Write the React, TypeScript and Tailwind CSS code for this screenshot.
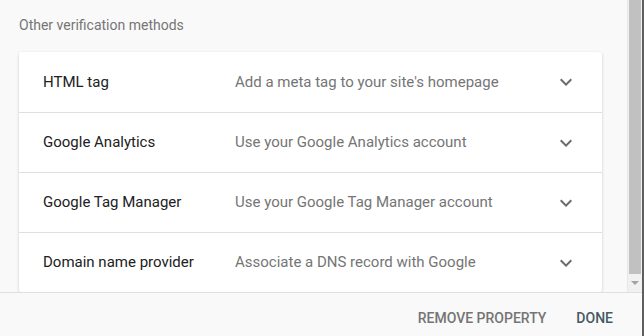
const METHODS = [
  { name: 'HTML tag', desc: "Add a meta tag to your site's homepage" },
  { name: 'Google Analytics', desc: 'Use your Google Analytics account' },
  { name: 'Google Tag Manager', desc: 'Use your Google Tag Manager account' },
  { name: 'Domain name provider', desc: 'Associate a DNS record with Google' },
];

function ExpandMore() {
  return (
    <svg width="24" height="24" viewBox="0 0 24 24" className="text-[#6b6b6b]">
      <path d="M16.59 8.59L12 13.17 7.41 8.59 6 10l6 6 6-6z" fill="currentColor" />
    </svg>
  );
}

export default function App() {
  return (
    <div className="flex w-[644px] h-[336px] bg-[#f9f9f9] font-['Roboto',sans-serif] overflow-hidden">
      <div className="flex flex-col w-[642px]">
        {/* Scroll area */}
        <div className="flex h-[292px]">
          <div className="flex-1 overflow-hidden pl-[19px] pr-[25px]">
            <p className="pt-[16px] text-[14px] leading-[18px] text-[#757575]">Other verification methods</p>
            <div className="mt-[18px] bg-white rounded-[2px] shadow-[0_1px_3px_rgba(0,0,0,0.2)]">
              {METHODS.map((m, i) => (
                <div
                  key={m.name}
                  className={`flex items-center h-[60px] ${i > 0 ? 'border-t border-[#e0e0e0]' : ''}`}
                >
                  <span className="w-[216px] pl-[24px] text-[15px] text-[#212121]">{m.name}</span>
                  <span className="flex-1 text-[15px] text-[#757575]">{m.desc}</span>
                  <span className="mr-[24px] flex items-center">
                    <ExpandMore />
                  </span>
                </div>
              ))}
            </div>
          </div>
          {/* fake scrollbar */}
          <div className="flex flex-col w-[15px] bg-[#f1f1f1] border-l border-[#e8e8e8]">
            <div className="mx-[1px] h-[274px] bg-[#c1c1c1]" />
            <div className="flex-1 flex items-center justify-center">
              <div className="w-0 h-0 border-l-[4px] border-r-[4px] border-t-[4px] border-l-transparent border-r-transparent border-t-[#a3a3a3]" />
            </div>
          </div>
        </div>
        {/* Footer */}
        <div className="flex-1 flex items-center justify-end gap-[30px] pr-[29px] pt-[8px] border-t border-[#e0e0e0] bg-[#f9f9f9]">
          <button className="text-[14px] font-medium text-[#757575]">REMOVE PROPERTY</button>
          <button className="text-[14px] font-medium text-[#455a64]">DONE</button>
        </div>
      </div>
      <div className="w-[2px] bg-[#5f5f5f]" />
    </div>
  );
}
